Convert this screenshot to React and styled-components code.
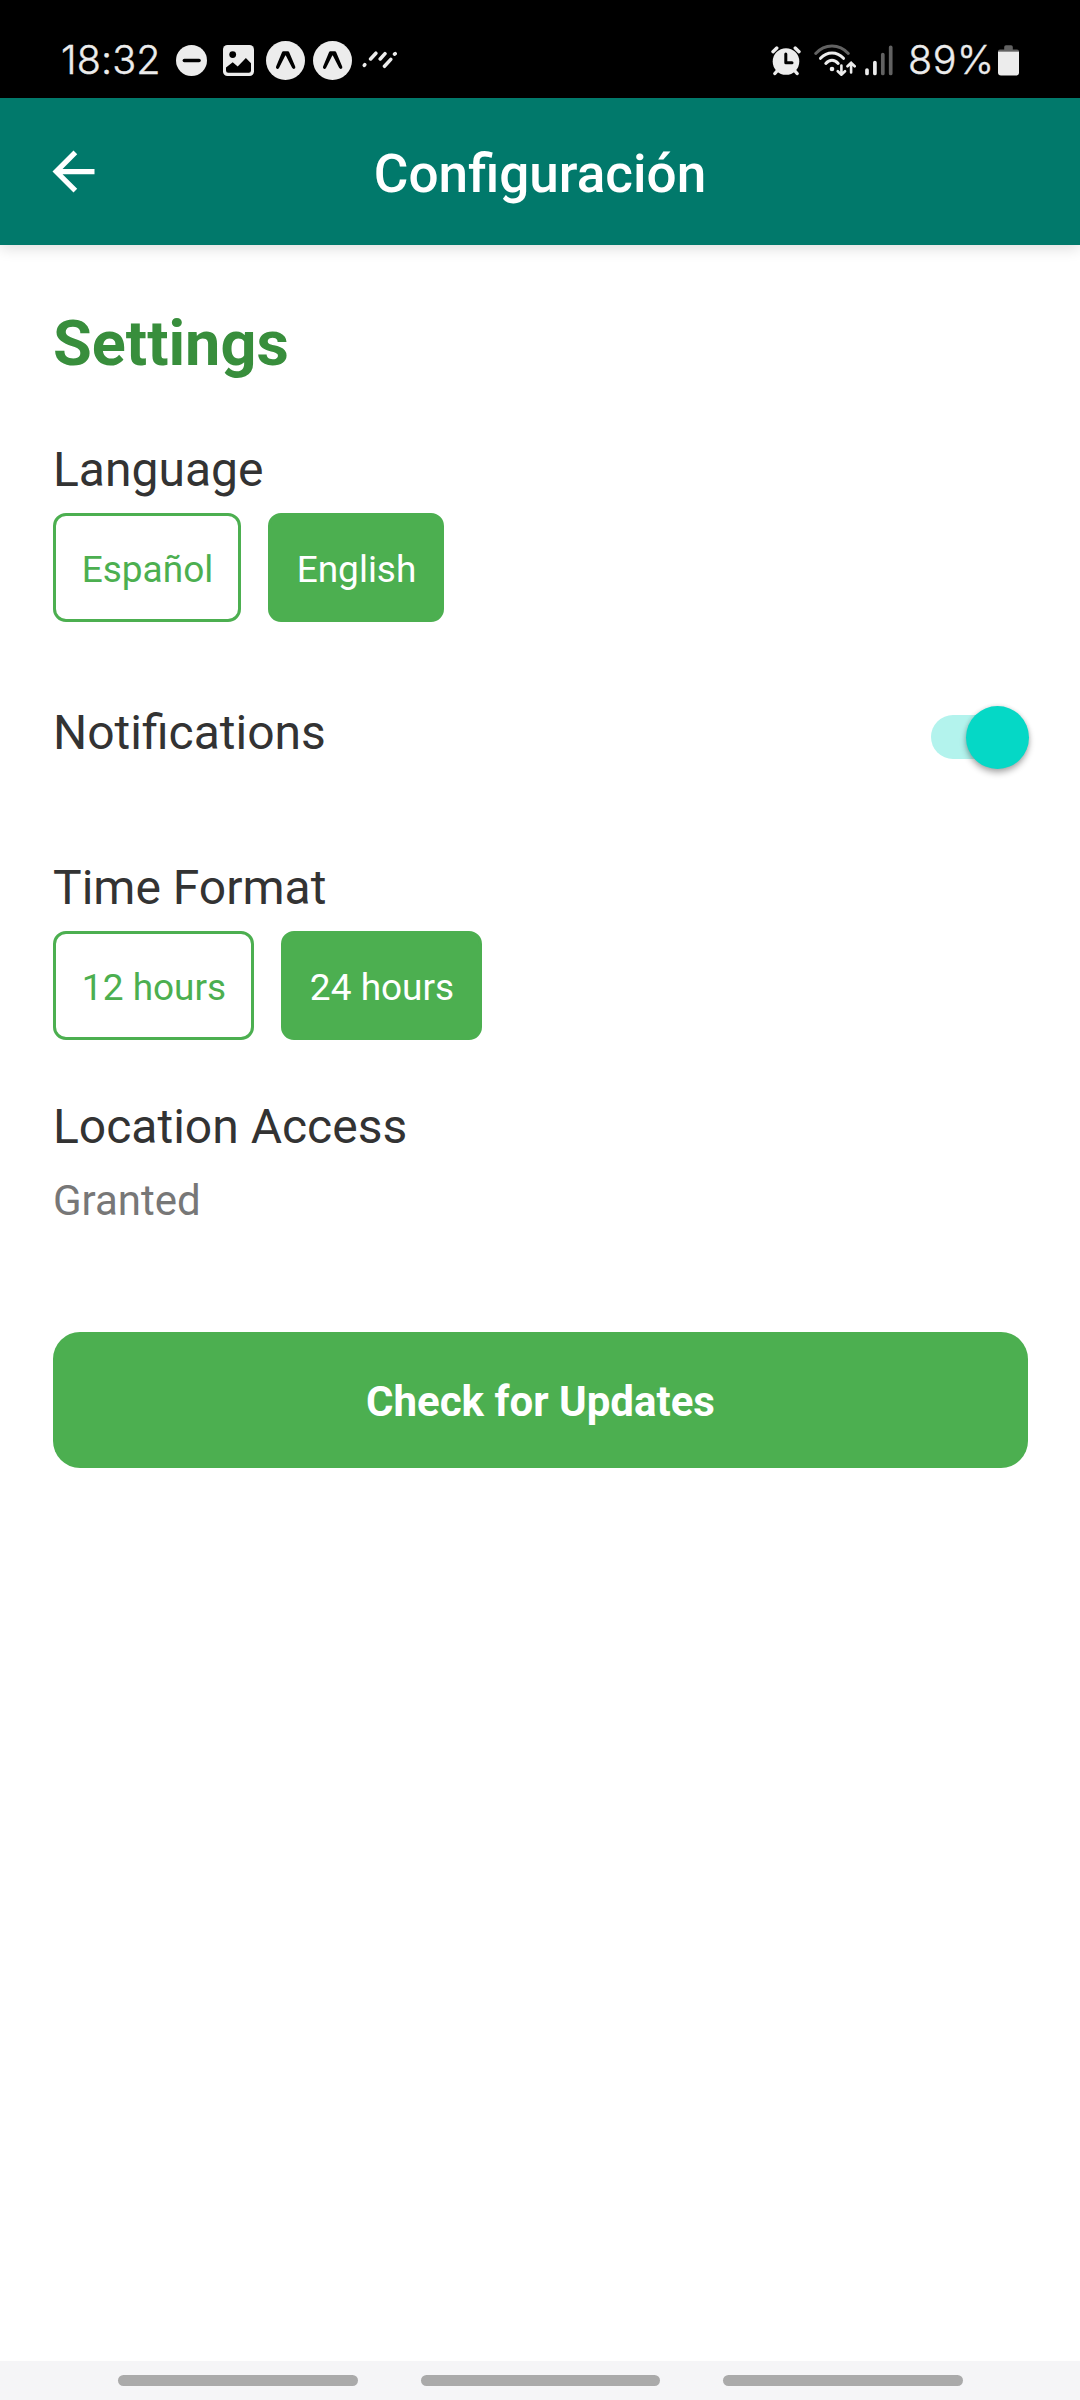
import React, { useState } from "react";
import styled, { createGlobalStyle } from "styled-components";

const GlobalStyle = createGlobalStyle`
  * { box-sizing: border-box; }
  body {
    margin: 0;
    background: #fff;
    font-family: Roboto, "Noto Sans", sans-serif;
  }
  button { font-family: inherit; cursor: pointer; }
  svg { display: block; flex: none; }
`;

const Screen = styled.div`
  width: 1080px;
  height: 2400px;
  display: flex;
  flex-direction: column;
  background: #fff;
  overflow: hidden;
`;

const StatusBar = styled.div`
  flex: none;
  height: 98px;
  padding: 22px 61px 0 61px;
  display: flex;
  justify-content: space-between;
  background: #000;
  color: #ececec;
`;

const StatusGroup = styled.div`
  height: 76px;
  display: flex;
  align-items: center;
`;

const StatusText = styled.span`
  width: ${(p) => p.$width}px;
  font-family: Inter, Roboto, sans-serif;
  font-size: 39.5px;
  font-weight: 300;
  line-height: 75px;
  letter-spacing: ${(p) => p.$tracking}px;
  white-space: nowrap;
  -webkit-text-stroke: 0.4px #ececec;
`;

const IconSlot = styled.span`
  display: flex;
  margin-left: ${(p) => p.$gap}px;
`;

const Header = styled.header`
  flex: none;
  height: 147px;
  padding: 0 42px;
  display: grid;
  grid-template-columns: 64px 1fr 64px;
  align-items: center;
  background: #01796b;
  box-shadow: 0 3px 14px rgba(0, 0, 0, 0.14);
`;

const BackButton = styled.button`
  display: flex;
  width: 63px;
  height: 63px;
  margin-top: -1px;
  padding: 0;
  border: 0;
  background: none;
  color: #fff;
`;

const HeaderTitle = styled.h1`
  margin: 4px 0 0;
  text-align: center;
  font-size: 53.1px;
  font-weight: 500;
  line-height: 64px;
  color: #fff;
`;

const Content = styled.main`
  flex: 1;
  padding: 57px 52px 0 53px;
  display: flex;
  flex-direction: column;
`;

const PageTitle = styled.h2`
  margin: 0 0 52px;
  font-size: 63px;
  font-weight: 700;
  line-height: 84px;
  color: #388e3c;
`;

const Section = styled.section`
  display: flex;
  flex-direction: column;
  gap: ${(p) => p.$gap}px;
  margin-bottom: ${(p) => p.$after}px;
`;

const SettingRow = styled.section`
  height: 64px;
  display: flex;
  justify-content: space-between;
  margin-bottom: 91px;
`;

const Label = styled.div`
  font-size: 48px;
  line-height: 64px;
  color: #333;
`;

const Value = styled.div`
  font-size: 42px;
  line-height: 56px;
  color: #777;
`;

const Options = styled.div`
  display: flex;
  gap: 27px;
`;

const OptionButton = styled.button`
  width: ${(p) => p.$width}px;
  height: 109px;
  padding: 5px 0 0 1px;
  border: 3px solid #4caf50;
  border-radius: 13px;
  background: ${(p) => (p.$active ? "#4caf50" : "#fff")};
  color: ${(p) => (p.$active ? "#fff" : "#4caf50")};
  font-size: 37px;
  line-height: 50px;
  white-space: nowrap;
`;

const Switch = styled.button`
  width: 97px;
  height: 44px;
  margin: 14px 0 0;
  padding: 0;
  border: 0;
  border-radius: 22px;
  display: flex;
  align-items: center;
  justify-content: ${(p) => (p.$on ? "flex-end" : "flex-start")};
  background: ${(p) => (p.$on ? "#b3f3ed" : "#cfcfcf")};
`;

const Thumb = styled.span`
  flex: none;
  width: 63px;
  height: 63px;
  margin: 1px -1px 0 0;
  border-radius: 50%;
  background: #05d8c6;
  box-shadow: 0 4px 6px rgba(0, 0, 0, 0.3), 0 0 4px rgba(0, 0, 0, 0.12);
`;

const UpdateButton = styled.button`
  height: 136px;
  padding: 4px 0 0;
  border: 0;
  border-radius: 27px;
  background: #4caf50;
  color: #fff;
  font-size: 42px;
  font-weight: 700;
  line-height: 56px;
`;

const NavBar = styled.nav`
  flex: none;
  height: 39px;
  padding: 14px 0 0 118px;
  display: flex;
  gap: 63px;
  background: #f5f5f7;
`;

const NavHandle = styled.span`
  width: 239.5px;
  height: 11px;
  border-radius: 5.5px;
  background: #aaa;
`;

const DndIcon = () => (
  <svg width="31" height="31" viewBox="0 0 31 31">
    <circle cx="15.5" cy="15.5" r="15.5" fill="#ececec" />
    <path d="M8.3 15.5h14.8" stroke="#000" strokeWidth="3.4" strokeLinecap="round" />
  </svg>
);

const PictureIcon = () => (
  <svg width="31" height="31" viewBox="0 0 31 31">
    <rect width="31" height="31" rx="4.5" fill="#ececec" />
    <circle cx="9.7" cy="9.6" r="3.4" fill="#000" />
    <path d="M3 22.5l6.7-5.3 5 4.3 8.2-8.5 5.1 5.3v7.2q0 2.2-2.2 2.2H5.2Q3 27.7 3 25.5z" fill="#000" />
  </svg>
);

const ExpoIcon = () => (
  <svg width="39" height="39" viewBox="0 0 39 39">
    <circle cx="19.5" cy="19.5" r="19.5" fill="#ececec" />
    <path
      d="M17.3 10.3h4.6q.9 0 1.3.9l6 14.3q.6 1.7-.8 2.3-1.4.5-2.3-1L19.8 14.5h-.5L13 27q-.9 1.4-2.2.8-1.3-.7-.7-2.3l5.9-14.3q.4-.9 1.3-.9z"
      fill="#000"
    />
  </svg>
);

const StrokesIcon = () => (
  <svg width="36" height="20" viewBox="0 0 36 20" fill="none" stroke="#ececec" strokeWidth="3.5" strokeLinecap="round">
    <path d="M2.3 15.3l.5-.6M8.6 9l5.3-5.8M18.2 9l4.8-5.3M22.5 16.3l6.3-6.9M32.5 4.2l.7-.6" />
  </svg>
);

const AlarmIcon = () => (
  <svg width="30" height="31" viewBox="0 0 30 31">
    <g stroke="#ececec" strokeWidth="3.4" strokeLinecap="round">
      <path d="M2 6.7l3.8-3.6M28 6.7l-3.8-3.6M6.5 25.5l-2.6 3M23.5 25.5l2.6 3" />
    </g>
    <circle cx="15" cy="16.5" r="13.3" fill="#ececec" />
    <path d="M14.8 9v8.8H21" fill="none" stroke="#000" strokeWidth="3" strokeLinejoin="round" strokeLinecap="round" />
  </svg>
);

const WifiIcon = () => (
  <svg width="42" height="32" viewBox="0 0 42 32" fill="none" strokeLinecap="round">
    <path d="M1.7 9.5Q8.5 2 18 2t16.3 7.5" stroke="#626262" strokeWidth="2.9" />
    <path d="M6.5 14.3Q11.5 9 18 9t11.5 5.3" stroke="#ececec" strokeWidth="3" />
    <path d="M11.8 19.4Q14.6 16.3 18 16.3t6.2 3.1" stroke="#ececec" strokeWidth="3" />
    <circle cx="18" cy="25" r="2.3" fill="#ececec" />
    <path d="M27.4 21.5v9M23.8 27.2l3.6 3.5 3.6-3.5M37.1 28.5v-9M33.5 22.3l3.6-3.5 3.6 3.5" stroke="#ececec" strokeWidth="2.6" />
  </svg>
);

const SignalIcon = () => (
  <svg width="28" height="31" viewBox="0 0 28 31" fill="none" strokeWidth="3.7" strokeLinecap="round">
    <path d="M2 25v3.5M9.9 17.5v11" stroke="#ececec" />
    <path d="M17.8 9.5v19M25.7 2.3v26.2" stroke="#626262" />
  </svg>
);

const BatteryIcon = () => (
  <svg width="21" height="31" viewBox="0 0 21 31">
    <path d="M6.2 2q0-1.8 1.8-1.8h5q1.8 0 1.8 1.8v2.5H19q2 0 2 2H0q0-2 2-2h4.2z" fill="#626262" />
    <path d="M0 6.5h21v21q0 3-3 3H3q-3 0-3-3z" fill="#ececec" />
  </svg>
);

const BackArrow = () => (
  <svg width="63" height="63" viewBox="0 0 24 24" fill="currentColor">
    <path d="M20 11H7.83l5.59-5.59L12 4l-8 8 8 8 1.41-1.41L7.83 13H20v-2z" />
  </svg>
);

const languages = [
  { id: "es", label: "Español", width: 188 },
  { id: "en", label: "English", width: 176 },
];

const timeFormats = [
  { id: "12", label: "12 hours", width: 201 },
  { id: "24", label: "24 hours", width: 201 },
];

function Choice({ items, value, onChange }) {
  return (
    <Options>
      {items.map((item) => (
        <OptionButton
          key={item.id}
          $width={item.width}
          $active={item.id === value}
          onClick={() => onChange(item.id)}
        >
          {item.label}
        </OptionButton>
      ))}
    </Options>
  );
}

export default function App() {
  const [language, setLanguage] = useState("en");
  const [format, setFormat] = useState("24");
  const [notify, setNotify] = useState(true);

  return (
    <Screen>
      <GlobalStyle />
      <StatusBar>
        <StatusGroup>
          <StatusText $width={98} $tracking={0.1}>18:32</StatusText>
          <IconSlot $gap={17}><DndIcon /></IconSlot>
          <IconSlot $gap={16}><PictureIcon /></IconSlot>
          <IconSlot $gap={12}><ExpoIcon /></IconSlot>
          <IconSlot $gap={8}><ExpoIcon /></IconSlot>
          <IconSlot $gap={10}><StrokesIcon /></IconSlot>
        </StatusGroup>
        <StatusGroup>
          <AlarmIcon />
          <IconSlot $gap={13}><WifiIcon /></IconSlot>
          <IconSlot $gap={9}><SignalIcon /></IconSlot>
          <IconSlot $gap={15}>
            <StatusText $width={90} $tracking={0.6}>89%</StatusText>
          </IconSlot>
          <BatteryIcon />
        </StatusGroup>
      </StatusBar>

      <Header>
        <BackButton aria-label="Volver">
          <BackArrow />
        </BackButton>
        <HeaderTitle>Configuración</HeaderTitle>
      </Header>

      <Content>
        <PageTitle>Settings</PageTitle>
        <Section $gap={11} $after={79}>
          <Label>Language</Label>
          <Choice items={languages} value={language} onChange={setLanguage} />
        </Section>
        <SettingRow>
          <Label>Notifications</Label>
          <Switch role="switch" aria-checked={notify} $on={notify} onClick={() => setNotify(!notify)}>
            <Thumb />
          </Switch>
        </SettingRow>
        <Section $gap={11} $after={55}>
          <Label>Time Format</Label>
          <Choice items={timeFormats} value={format} onChange={setFormat} />
        </Section>
        <Section $gap={14} $after={103}>
          <Label>Location Access</Label>
          <Value>Granted</Value>
        </Section>
        <UpdateButton>Check for Updates</UpdateButton>
      </Content>

      <NavBar>
        <NavHandle />
        <NavHandle />
        <NavHandle />
      </NavBar>
    </Screen>
  );
}
